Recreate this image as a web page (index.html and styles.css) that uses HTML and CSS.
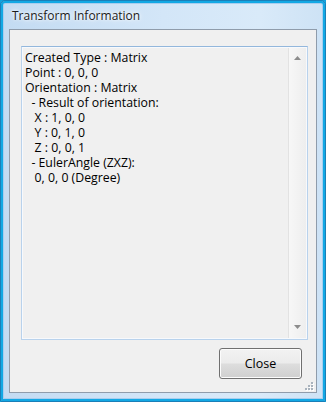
FILE: index.html
```html
<!DOCTYPE html>
<html>
<head>
<meta charset="utf-8">
<link rel="stylesheet" href="styles.css">
</head>
<body>
<div class="window">
  <div class="titlebar"><span class="title">Transform Information</span></div>
  <div class="client">
    <div class="textbox">
      <div class="content">Created Type : Matrix
Point : 0, 0, 0
Orientation : Matrix
  - Result of orientation:
   X : 1, 0, 0
   Y : 0, 1, 0
   Z : 0, 0, 1
  - EulerAngle (ZXZ):
   0, 0, 0 (Degree)</div>
      <div class="scrollbar">
        <svg class="arrow" width="9" height="6" viewBox="0 0 9 6"><path d="M4.5 1 L8 5 L1 5 Z" fill="#8c8c8c"/></svg>
        <svg class="arrow" width="9" height="6" viewBox="0 0 9 6"><path d="M1 1 L8 1 L4.5 5 Z" fill="#8c8c8c"/></svg>
      </div>
    </div>
    <div class="footer">
      <button class="btn">Close</button>
    </div>
    <svg class="grip" width="9" height="9" viewBox="0 0 9 9">
      <g fill="#ffffff">
        <rect x="7" y="1" width="2" height="2"/>
        <rect x="4" y="4" width="2" height="2"/><rect x="7" y="4" width="2" height="2"/>
        <rect x="1" y="7" width="2" height="2"/><rect x="4" y="7" width="2" height="2"/><rect x="7" y="7" width="2" height="2"/>
      </g>
      <g fill="#a9b3bd">
        <rect x="6" y="0" width="2" height="2"/>
        <rect x="3" y="3" width="2" height="2"/><rect x="6" y="3" width="2" height="2"/>
        <rect x="0" y="6" width="2" height="2"/><rect x="3" y="6" width="2" height="2"/><rect x="6" y="6" width="2" height="2"/>
      </g>
    </svg>
  </div>
</div>
</body>
</html>
```
FILE: styles.css
```css
html, body {
  margin: 0;
  padding: 0;
  background: #11a2dc;
}
.window {
  width: 326px;
  height: 402px;
  box-sizing: border-box;
  display: flex;
  flex-direction: column;
  padding: 0 8px 8px;
  border: 1px solid #1a7fb8;
  border-radius: 5px 5px 2px 2px;
  background: linear-gradient(to right, #c3dbf2 0%, #d3e6f8 50%, #d9eaf9 80%, #cde2f5 100%);
  box-shadow: inset 0 0 0 2px #12a8e4, inset 0 0 0 3px #a9cdee;
}
.titlebar {
  height: 28px;
  display: flex;
  align-items: center;
  padding-left: 3px;
  padding-top: 1px;
}
.title {
  font-family: "Open Sans", "Liberation Sans", sans-serif;
  font-size: 12px;
  color: #1b1b1b;
  text-shadow: 0 0 6px #ffffff, 0 0 3px #ffffff;
}
.client {
  position: relative;
  flex: 1;
  display: flex;
  flex-direction: column;
  background: #f0f0f0;
  border: 1px solid #8f9cab;
  padding: 16px 8px 13px 11px;
}
.textbox {
  height: 294px;
  box-sizing: border-box;
  display: flex;
  border: 1px solid #b9d2ec;
  border-top-color: #93b7dc;
  box-shadow: inset 0 0 0 1px #f7f9fc;
}
.content {
  flex: 1;
  padding: 3px 3px;
  font-family: "Open Sans", "Liberation Sans", sans-serif;
  font-size: 12.3px;
  line-height: 15px;
  color: #000;
  white-space: pre;
}
.scrollbar {
  width: 17px;
  margin: 1px 1px 1px 0;
  border-left: 1px solid #e2e2e2;
  background: linear-gradient(to right, #f7f7f7, #eeeeee);
  display: flex;
  flex-direction: column;
  justify-content: space-between;
  align-items: center;
  padding: 7px 0 8px;
}
.arrow {
  display: block;
}
.footer {
  display: flex;
  justify-content: flex-end;
  margin-top: 8px;
  padding-right: 6px;
}
.btn {
  width: 83px;
  height: 31px;
  box-sizing: border-box;
  border: 1px solid #707070;
  border-radius: 3px;
  background: linear-gradient(to bottom, #f2f2f2 0%, #ebebeb 48%, #dddddd 52%, #cfcfcf 100%);
  box-shadow: inset 0 0 0 1px #fcfcfc;
  font-family: "Open Sans", "Liberation Sans", sans-serif;
  font-size: 12.5px;
  color: #000;
  padding: 0;
}
.grip {
  position: absolute;
  right: 2px;
  bottom: 1px;
}
```
